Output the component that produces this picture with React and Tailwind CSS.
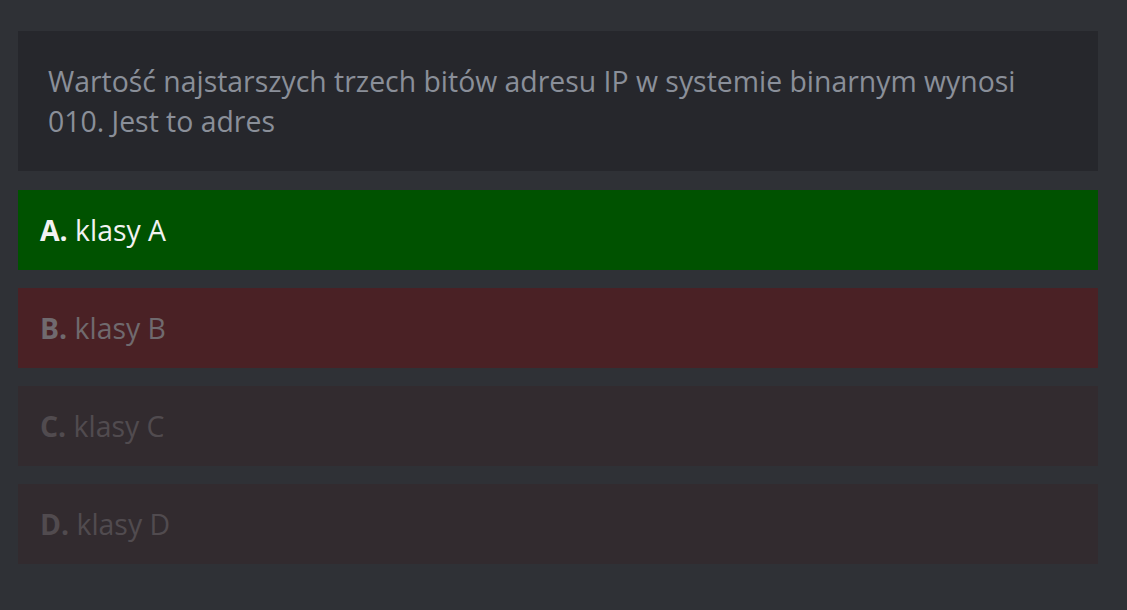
export default function App() {
  const opts = [
    { l: "A.", t: "klasy A", bg: "bg-[#005200]", fg: "text-[#f2f2f2]" },
    { l: "B.", t: "klasy B", bg: "bg-[#4a2125]", fg: "text-[#706a6e]" },
    { l: "C.", t: "klasy C", bg: "bg-[#322b2f]", fg: "text-[#514b4f]" },
    { l: "D.", t: "klasy D", bg: "bg-[#322b2f]", fg: "text-[#514b4f]" },
  ];
  return (
    <div
      className="w-[1127px] h-[610px] bg-[#2f3136] pt-[31px] pl-[18px]"
      style={{ fontFamily: '"Open Sans", sans-serif' }}
    >
      <div className="w-[1080px]">
        <div className="bg-[#26272c] px-[30px] py-[30px] text-[28.4px] leading-[40px] text-[#8a8f99]">
          Wartość najstarszych trzech bitów adresu IP w systemie binarnym wynosi 010. Jest to adres
        </div>
        <div className="mt-[19px] flex flex-col gap-[18px]">
          {opts.map((o) => (
            <div key={o.l} className={`${o.bg} ${o.fg} h-[80px] flex items-center pl-[22px] text-[28.4px] whitespace-pre`}>
              <span className="font-bold">{o.l}</span>
              <span>{" " + o.t}</span>
            </div>
          ))}
        </div>
      </div>
    </div>
  );
}
